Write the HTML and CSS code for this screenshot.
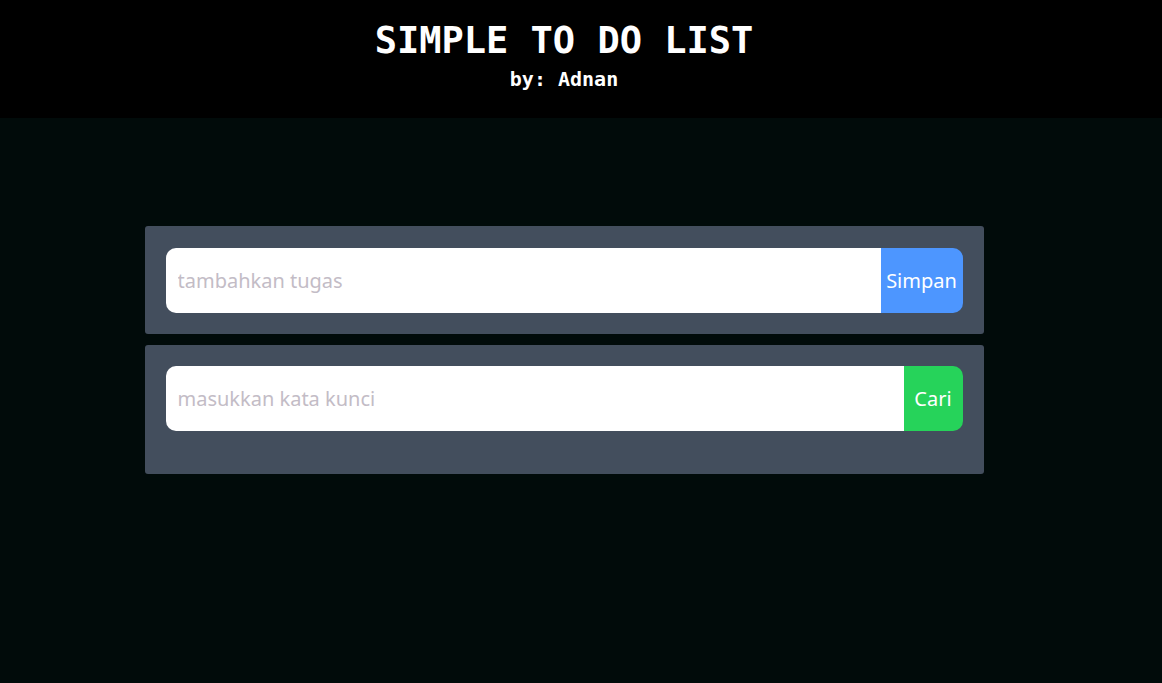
FILE: index.html
```html
<!DOCTYPE html>
<html lang="id">
<head>
<meta charset="utf-8">
<title>Simple To Do List</title>
<link rel="stylesheet" href="styles.css">
</head>
<body>
<header class="header">
  <div class="frame header-inner">
    <h1 class="title">SIMPLE TO DO LIST</h1>
    <p class="byline">by: Adnan</p>
  </div>
</header>
<main class="frame main">
  <section class="card card-add">
    <form class="row">
      <input class="field" type="text" placeholder="tambahkan tugas">
      <button class="btn btn-save" type="button">Simpan</button>
    </form>
  </section>
  <section class="card card-search">
    <form class="row">
      <input class="field" type="text" placeholder="masukkan kata kunci">
      <button class="btn btn-find" type="button">Cari</button>
    </form>
    <ul class="list"></ul>
  </section>
</main>
</body>
</html>
```
FILE: styles.css
```css
* { box-sizing: border-box; }
html, body { margin: 0; padding: 0; }
body {
  background: #010b0a;
  min-height: 683px;
  font-family: "Segoe UI", "Noto Sans", "Open Sans", sans-serif;
}
.frame {
  width: calc(100% - 34px);
}
.header {
  background: #000000;
  height: 118px;
}
.header-inner {
  display: flex;
  flex-direction: column;
  align-items: center;
  padding-top: 20px;
}
.title {
  margin: 0;
  color: #ffffff;
  font-family: "DejaVu Sans Mono", "Liberation Mono", monospace;
  font-size: 37px;
  font-weight: bold;
  line-height: 42px;
}
.byline {
  margin: 5px 0 0;
  color: #ffffff;
  font-family: "DejaVu Sans Mono", "Liberation Mono", monospace;
  font-size: 20px;
  font-weight: bold;
  line-height: 24px;
}
.main {
  display: flex;
  flex-direction: column;
  align-items: center;
  gap: 11px;
  padding-top: 108px;
}
.card {
  width: 839px;
  background: #434e5d;
  border-radius: 3px;
  padding: 22px 21px 21px;
}
.card-search {
  padding-top: 21px;
}
.row {
  display: flex;
  margin: 0;
  height: 65px;
}
.field {
  flex: 1;
  min-width: 0;
  border: none;
  outline: none;
  border-radius: 10px 0 0 10px;
  background: #ffffff;
  padding: 0 12px;
  font-family: inherit;
  font-size: 20px;
  color: #222;
}
.field::placeholder {
  color: #c3bcc6;
}
.btn {
  border: none;
  border-radius: 0 10px 10px 0;
  color: #ffffff;
  font-family: inherit;
  font-size: 20px;
  padding: 0;
  cursor: pointer;
}
.btn-save {
  width: 82px;
  background: #4d96ff;
}
.btn-find {
  width: 59px;
  background: #26d35a;
}
.list {
  list-style: none;
  margin: 0;
  padding: 0;
  height: 22px;
}
```
